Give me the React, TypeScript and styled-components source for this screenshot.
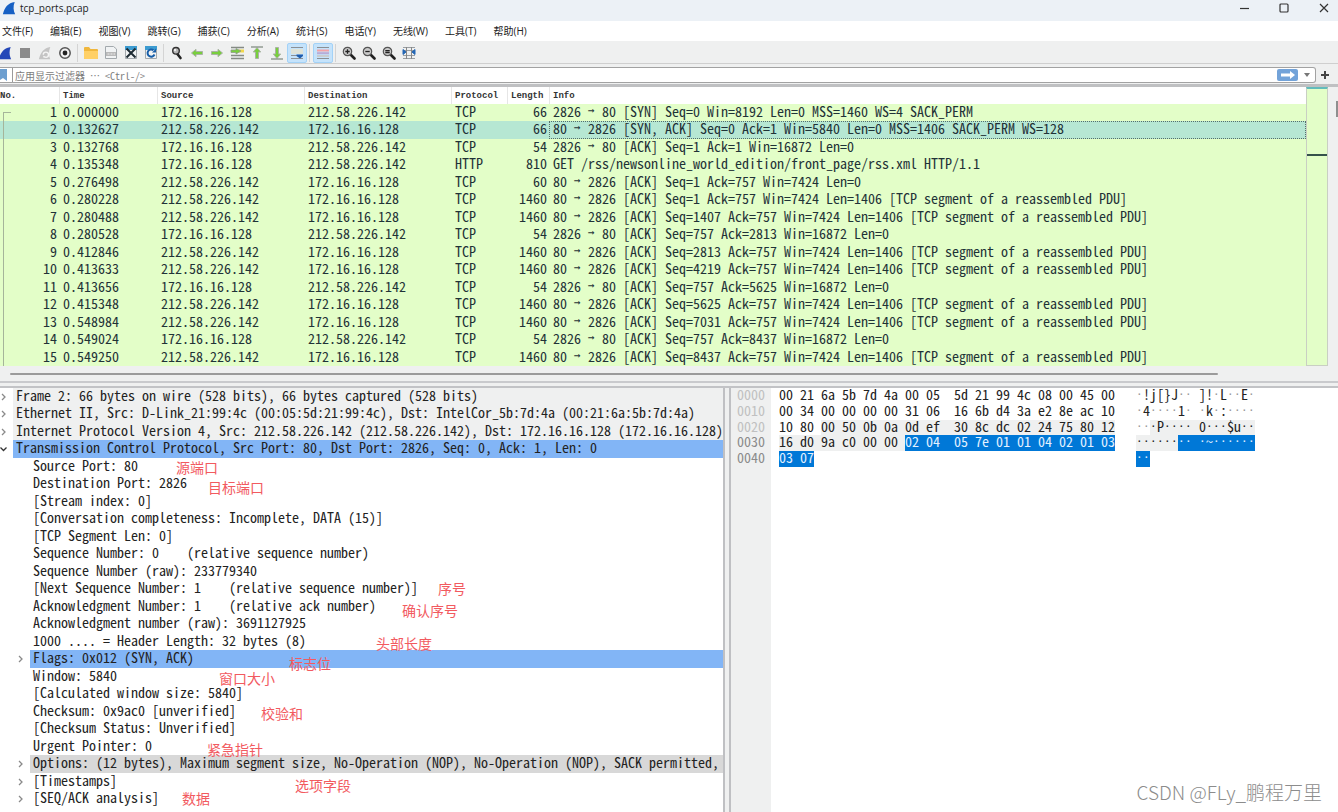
import React from 'react';
import styled, { createGlobalStyle, css } from 'styled-components';

const MONO = '"Noto Sans Mono CJK SC", "Liberation Mono", monospace';
const UI = '"Open Sans", "Noto Sans CJK SC", sans-serif';
const CHROME = '#eff0f0';
const GREEN = '#e3fec8';

const GlobalStyle = createGlobalStyle`
  * { box-sizing: border-box; }
  body { margin: 0; background: ${CHROME}; overflow-x: hidden; }
  button { border: 0; padding: 0; background: none; font: inherit; color: inherit; }
`;

const Window = styled.div`
  position: relative;
  display: flex;
  flex-direction: column;
  min-height: 100vh;
  background: ${CHROME};
  font-family: ${UI};
  color: #222;
`;

const TitleBar = styled.header`
  display: flex;
  align-items: flex-start;
  justify-content: space-between;
  height: 21px;
  padding-left: 2px;
  background: #ecf1f6;
`;

const Title = styled.h1`
  display: flex;
  align-items: center;
  gap: 4px;
  margin: 0;
  font-size: 10px;
  font-weight: 400;
  line-height: 16px;
`;

const WindowButtons = styled.div`
  display: flex;
  gap: 20px;
  padding-right: 4px;
`;

const WindowButton = styled.button`
  display: flex;
  align-items: center;
  justify-content: center;
  width: 20px;
  height: 15px;
  color: #333;
`;

const MenuBar = styled.nav`
  display: flex;
  gap: 17px;
  height: 20px;
  padding-left: 2px;
  background: #fff;
`;

const MenuItem = styled.button`
  font-size: 10px;
  line-height: 20px;
  white-space: nowrap;
`;

const ToolBar = styled.div`
  display: flex;
  align-items: center;
  height: 22px;
  margin-left: -5px;
  padding-top: 1px;
`;

const ToolButton = styled.button<{ $on?: boolean }>`
  display: flex;
  align-items: center;
  justify-content: center;
  width: 20px;
  height: 20px;
  border-radius: 2px;
  ${p => p.$on && css`background: #c5e3fb; border: 1px solid #a3d2f7;`}
`;

const ToolLine = styled.span`
  width: 6px;
  height: 18px;
  background: linear-gradient(90deg, transparent 2px, #d4d4d4 2px, #d4d4d4 3px, transparent 3px);
`;

const FilterBar = styled.form`
  display: flex;
  align-items: center;
  height: 21px;
  padding-top: 2px;
  border-top: 1px solid #cfcfcf;
`;

const FilterBox = styled.div`
  display: flex;
  align-items: center;
  flex: 1;
  height: 16px;
  border: 1px solid #a2a2a2;
  border-left: 0;
  border-radius: 0 3px 3px 0;
  background: #fff;
`;

const Bookmark = styled.button`
  display: flex;
  width: 13px;
  height: 14px;
  border-right: 1px solid #9a9a9a;
  align-items: center;
`;

const FilterInput = styled.input`
  flex: 1;
  min-width: 0;
  height: 14px;
  padding: 0 2px;
  border: 0;
  outline: 0;
  background: none;
  font-family: ${MONO};
  font-size: 10px;
  &::placeholder { color: #7d7d7d; opacity: 1; }
`;

const ApplyButton = styled.button`
  display: flex;
  align-items: center;
  justify-content: center;
  width: 21px;
  height: 12px;
  border-radius: 2px;
  background: #73a3d9;
`;

const SmallButton = styled.button`
  display: flex;
  align-items: center;
  justify-content: center;
  width: 17px;
  height: 14px;
  color: #444;
`;

const AddButton = styled(SmallButton)`
  width: 22px;
  padding-right: 4px;
`;

const PacketPane = styled.section`
  display: flex;
  border-top: 3px solid #bfc0c2;
`;

const PacketTable = styled.table`
  flex: 1;
  min-width: 0;
  table-layout: fixed;
  border-collapse: separate;
  border-spacing: 0;
  background: #fff;
  font-family: ${MONO};
`;

const HeadCell = styled.th<{ $w?: number }>`
  width: ${p => (p.$w ? `${p.$w}px` : 'auto')};
  height: 17px;
  padding: 0 0 0 3px;
  border-left: 1px solid #e6e6e6;
  color: #333;
  font-family: "Liberation Mono", monospace;
  font-size: 9px;
  font-weight: 700;
  line-height: 16px;
  text-align: left;
  white-space: nowrap;
  &:first-child { padding-left: 0; border-left: 0; }
`;

const PacketRow = styled.tr<{ $selected: boolean }>`
  height: 18px;
  background: ${p => (p.$selected ? '#b6e7d3' : GREEN)};
  &:nth-child(odd) { height: 17px; }
`;

const Cell = styled.td<{ $right?: boolean; $focus?: boolean }>`
  padding: 0 ${p => (p.$right ? 2 : 0)}px 0 ${p => (p.$right ? 0 : 4)}px;
  color: #1f3237;
  font-size: 14px;
  line-height: 14px;
  vertical-align: top;
  text-align: ${p => (p.$right ? 'right' : 'left')};
  white-space: pre;
  ${p => p.$focus && css`outline: 1px dotted #55706a; outline-offset: -1px;`}
`;

const NumberCell = styled(Cell)`
  position: relative;
  &::before {
    content: '';
    position: absolute;
    top: 0;
    bottom: 0;
    left: 3px;
    border-left: 1px solid #a5b59a;
  }
  ${PacketRow}:first-child &::before {
    top: 8px;
    width: 7px;
    border-top: 1px solid #a5b59a;
  }
`;

const Arrow = styled.span`
  display: inline-block;
  width: 7px;
  font-family: "DejaVu Sans Mono", monospace;
  font-size: 11px;
  line-height: 14px;
  vertical-align: top;
`;

const MiniMap = styled.div`
  width: 22px;
  padding-top: 65px;
  border: 1px solid #c9cfc3;
  border-top: 2px solid #62bcbc;
  background: ${GREEN};
  &::before { content: ''; display: block; height: 2px; background: #35524b; }
`;

const VerticalTrack = styled.div`
  width: 10px;
  padding: 14px 0 0 8px;
  &::before { content: ''; display: block; height: 16px; background: #8f8f8f; }
`;

const HorizontalTrack = styled.div`
  height: 15px;
  padding: 7px 0 0 10px;
`;

const HorizontalThumb = styled.div`
  width: 91%;
  height: 2px;
  border-radius: 1px;
  background: #9b9b9b;
`;

const Splitter = styled.div`
  height: 7px;
  border-top: 2px solid #c9cacd;
  border-bottom: 2px solid #c2c3c6;
`;

const DetailPanes = styled.main`
  display: grid;
  grid-template-columns: 723fr 8px 607fr;
  flex: 1;
`;

const PaneHandle = styled.div`
  border-left: 2px solid #bfc0c3;
  border-right: 2px solid #bfc0c3;
`;

const TreePane = styled.section`
  position: relative;
  min-width: 0;
  background: #fff;
`;

const Tree = styled.ul`
  margin: 0;
  padding: 0;
  list-style: none;
  font-family: ${MONO};
  font-size: 14px;
`;

const TreeRow = styled.li<{ $level: number }>`
  display: flex;
  align-items: center;
  height: 18px;
  padding-left: ${p => p.$level * 17}px;
  &:nth-child(odd) { height: 17px; }
`;

const Twisty = styled.button`
  display: flex;
  flex: none;
  width: 8px;
  margin-right: 5px;
  height: 16px;
  align-items: center;
`;

const TwistySpace = styled.span`
  flex: none;
  width: 13px;
`;

const tones = { plain: 'transparent', gray: CHROME, blue: '#82b5f6', dark: '#d8d8d8' };

const TreeLabel = styled.span<{ $tone: keyof typeof tones }>`
  flex: 1;
  min-width: 0;
  align-self: stretch;
  padding-left: 3px;
  background: ${p => tones[p.$tone]};
  color: #222;
  line-height: 14px;
  white-space: pre;
`;

const Note = styled.span<{ $x: number; $y: number }>`
  position: absolute;
  left: ${p => p.$x}px;
  top: ${p => p.$y}px;
  color: #f25a5f;
  font-family: "Noto Sans CJK SC", sans-serif;
  font-size: 14px;
  line-height: 20px;
  white-space: nowrap;
`;

const BytesPane = styled.section`
  min-width: 0;
  background: linear-gradient(90deg, ${CHROME} 40px, #fff 40px);
  font-family: ${MONO};
  font-size: 14px;
`;

const BytesLine = styled.div`
  display: flex;
  height: 16px;
  line-height: 13px;
  white-space: pre;
  &:nth-child(3n) { height: 15px; }
`;

const Offset = styled.span<{ $strong: boolean }>`
  width: 42px;
  padding-left: 6px;
  margin-right: 6px;
  color: ${p => (p.$strong ? '#8b8b8b' : '#c0c0c0')};
`;

const BytesColumn = styled.span<{ $w: number }>`
  display: flex;
  flex: none;
  width: ${p => p.$w}px;
`;

const marks = {
  none: css`color: #222;`,
  field: css`color: #222; background: ${CHROME};`,
  pick: css`color: #e3f1ff; background: #0078d7;`,
};

const Run = styled.span<{ $mark: keyof typeof marks }>`
  flex: none;
  ${p => marks[p.$mark]}
`;

const Dot = styled.span<{ $dim: boolean }>`
  display: inline-block;
  width: 7px;
  font-family: "DejaVu Sans Mono", monospace;
  font-size: 11px;
  line-height: 13px;
  vertical-align: top;
  ${p => p.$dim && css`color: #999;`}
`;

const Watermark = styled.div`
  position: absolute;
  right: 16px;
  bottom: 6px;
  color: #8c8c8c;
  font-family: "Noto Sans CJK SC", sans-serif;
  font-size: 19px;
  font-weight: 300;
  line-height: 28px;
`;

const A = '212.58.226.142';
const B = '172.16.16.128';
type Packet = [string, string, string, string, string, string];
const packets: Packet[] = [
  ['0.000000', B, A, 'TCP', '66', '2826 → 80 [SYN] Seq=0 Win=8192 Len=0 MSS=1460 WS=4 SACK_PERM'],
  ['0.132627', A, B, 'TCP', '66', '80 → 2826 [SYN, ACK] Seq=0 Ack=1 Win=5840 Len=0 MSS=1406 SACK_PERM WS=128'],
  ['0.132768', B, A, 'TCP', '54', '2826 → 80 [ACK] Seq=1 Ack=1 Win=16872 Len=0'],
  ['0.135348', B, A, 'HTTP', '810', 'GET /rss/newsonline_world_edition/front_page/rss.xml HTTP/1.1'],
  ['0.276498', A, B, 'TCP', '60', '80 → 2826 [ACK] Seq=1 Ack=757 Win=7424 Len=0'],
  ['0.280228', A, B, 'TCP', '1460', '80 → 2826 [ACK] Seq=1 Ack=757 Win=7424 Len=1406 [TCP segment of a reassembled PDU]'],
  ['0.280488', A, B, 'TCP', '1460', '80 → 2826 [ACK] Seq=1407 Ack=757 Win=7424 Len=1406 [TCP segment of a reassembled PDU]'],
  ['0.280528', B, A, 'TCP', '54', '2826 → 80 [ACK] Seq=757 Ack=2813 Win=16872 Len=0'],
  ['0.412846', A, B, 'TCP', '1460', '80 → 2826 [ACK] Seq=2813 Ack=757 Win=7424 Len=1406 [TCP segment of a reassembled PDU]'],
  ['0.413633', A, B, 'TCP', '1460', '80 → 2826 [ACK] Seq=4219 Ack=757 Win=7424 Len=1406 [TCP segment of a reassembled PDU]'],
  ['0.413656', B, A, 'TCP', '54', '2826 → 80 [ACK] Seq=757 Ack=5625 Win=16872 Len=0'],
  ['0.415348', A, B, 'TCP', '1460', '80 → 2826 [ACK] Seq=5625 Ack=757 Win=7424 Len=1406 [TCP segment of a reassembled PDU]'],
  ['0.548984', A, B, 'TCP', '1460', '80 → 2826 [ACK] Seq=7031 Ack=757 Win=7424 Len=1406 [TCP segment of a reassembled PDU]'],
  ['0.549024', B, A, 'TCP', '54', '2826 → 80 [ACK] Seq=757 Ack=8437 Win=16872 Len=0'],
  ['0.549250', A, B, 'TCP', '1460', '80 → 2826 [ACK] Seq=8437 Ack=757 Win=7424 Len=1406 [TCP segment of a reassembled PDU]'],
];

type Node = { text: string; level?: number; tone?: keyof typeof tones; twisty?: 'open' | 'closed' };
const nodes: Node[] = [
  { text: 'Frame 2: 66 bytes on wire (528 bits), 66 bytes captured (528 bits)', level: 0, tone: 'gray', twisty: 'closed' },
  { text: 'Ethernet II, Src: D-Link_21:99:4c (00:05:5d:21:99:4c), Dst: IntelCor_5b:7d:4a (00:21:6a:5b:7d:4a)', level: 0, tone: 'gray', twisty: 'closed' },
  { text: 'Internet Protocol Version 4, Src: 212.58.226.142 (212.58.226.142), Dst: 172.16.16.128 (172.16.16.128)', level: 0, tone: 'gray', twisty: 'closed' },
  { text: 'Transmission Control Protocol, Src Port: 80, Dst Port: 2826, Seq: 0, Ack: 1, Len: 0', level: 0, tone: 'blue', twisty: 'open' },
  { text: 'Source Port: 80' },
  { text: 'Destination Port: 2826' },
  { text: '[Stream index: 0]' },
  { text: '[Conversation completeness: Incomplete, DATA (15)]' },
  { text: '[TCP Segment Len: 0]' },
  { text: 'Sequence Number: 0    (relative sequence number)' },
  { text: 'Sequence Number (raw): 233779340' },
  { text: '[Next Sequence Number: 1    (relative sequence number)]' },
  { text: 'Acknowledgment Number: 1    (relative ack number)' },
  { text: 'Acknowledgment number (raw): 3691127925' },
  { text: '1000 .... = Header Length: 32 bytes (8)' },
  { text: 'Flags: 0x012 (SYN, ACK)', tone: 'blue', twisty: 'closed' },
  { text: 'Window: 5840' },
  { text: '[Calculated window size: 5840]' },
  { text: 'Checksum: 0x9ac0 [unverified]' },
  { text: '[Checksum Status: Unverified]' },
  { text: 'Urgent Pointer: 0' },
  { text: 'Options: (12 bytes), Maximum segment size, No-Operation (NOP), No-Operation (NOP), SACK permitted,', tone: 'dark', twisty: 'closed' },
  { text: '[Timestamps]', twisty: 'closed' },
  { text: '[SEQ/ACK analysis]', twisty: 'closed' },
];

const notes: [string, number, number][] = [
  ['源端口', 176, 69],
  ['目标端口', 208, 89],
  ['序号', 438, 190],
  ['确认序号', 402, 212],
  ['头部长度', 376, 245],
  ['标志位', 289, 265],
  ['窗口大小', 219, 280],
  ['校验和', 261, 315],
  ['紧急指针', 207, 351],
  ['选项字段', 295, 387],
  ['数据', 182, 400],
];

type Piece = [string, keyof typeof marks];
const dump: { offset: string; hex: Piece[]; text: Piece[] }[] = [
  { offset: '0000', hex: [['00 21 6a 5b 7d 4a 00 05  5d 21 99 4c 08 00 45 00', 'none']], text: [['·!j[}J·· ]!·L··E·', 'none']] },
  { offset: '0010', hex: [['00 34 00 00 00 00 31 06  16 6b d4 3a e2 8e ac 10', 'none']], text: [['·4····1· ·k·:····', 'none']] },
  { offset: '0020', hex: [['10 80 ', 'none'], ['00 50 0b 0a 0d ef  30 8c dc 02 24 75 80 12', 'field']], text: [['··', 'none'], ['·P···· 0···$u··', 'field']] },
  { offset: '0030', hex: [['16 d0 9a c0 00 00 ', 'field'], ['02 04  05 7e 01 01 04 02 01 03', 'pick']], text: [['······', 'field'], ['·· ·~······', 'pick']] },
  { offset: '0040', hex: [['03 07', 'pick']], text: [['··', 'pick']] },
];

const menus = ['文件(F)', '编辑(E)', '视图(V)', '跳转(G)', '捕获(C)', '分析(A)', '统计(S)', '电话(Y)', '无线(W)', '工具(T)', '帮助(H)'];
const columns: [string, number?][] = [['No.', 59], ['Time', 98], ['Source', 147], ['Destination', 147], ['Protocol', 56], ['Length', 42], ['Info']];

const Fin = ({ fill, size = 14 }: { fill: string; size?: number }) => (
  <svg width={size} height={size} viewBox="0 0 16 16">
    <path d="M1 15C3 7 7 2 14.500 1C12.500 6 13 11 15 15Z" fill={fill} />
  </svg>
);

const Lens = ({ sign }: { sign?: string }) => (
  <svg width="14" height="14" viewBox="0 0 14 14">
    <path d="M8.500 8.500L12.500 12.500" stroke="#222" strokeWidth="2.600" strokeLinecap="round" />
    <circle cx="5.500" cy="5.500" r="4.200" fill="#c9c9c9" stroke="#555" strokeWidth="1.200" />
    {sign && <path d={sign} stroke="#222" strokeWidth="1.300" fill="none" />}
  </svg>
);

const GreenArrow = ({ turn, bar }: { turn: number; bar?: string }) => (
  <svg width="14" height="16" viewBox="0 0 14 16">
    <g transform={`rotate(${turn} 7 8)`}>
      <path d="M1.500 8L6 4.300V6.500H12.500V9.500H6V11.700Z" fill="#78cf3c" stroke="#a9b3a4" strokeWidth="1" />
    </g>
    {bar && <path d={bar} stroke="#8c948c" strokeWidth="1.400" />}
  </svg>
);

const Sheet = ({ children }: { children: React.ReactNode }) => (
  <svg width="14" height="15" viewBox="0 0 14 15">
    <path d="M1.500 1.500H9.500L12.500 4V13.500H1.500Z" fill="#f1f3f4" stroke="#a3a9ad" />
    {children}
  </svg>
);

type Tool = { name: string; icon: React.ReactNode; on?: boolean } | 'line';
const tools: Tool[] = [
  { name: '开始捕获', icon: <Fin fill="#2447b8" /> },
  { name: '停止捕获', icon: <svg width="12" height="12"><rect x="1" y="1" width="10" height="10" fill="#8b8b8b" /></svg> },
  { name: '重新捕获', icon: (
    <svg width="14" height="14" viewBox="0 0 16 16">
      <path d="M1 15C3 7 7 2 14 1C12 6 12 11 14 15Z" fill="#c4c4c4" />
      <path d="M6 10A3 3 0 1 1 9 13M9 13L6 12" fill="none" stroke="#f5f5f5" strokeWidth="1.600" />
    </svg>
  ) },
  { name: '捕获选项', icon: (
    <svg width="14" height="14" viewBox="0 0 14 14">
      <circle cx="7" cy="7" r="5.200" fill="#f2f2f2" stroke="#555" strokeWidth="1.500" />
      <circle cx="7" cy="7" r="2.400" fill="#222" />
    </svg>
  ) },
  'line',
  { name: '打开', icon: (
    <svg width="16" height="14" viewBox="0 0 16 14">
      <path d="M1 2Q1 1 2 1H6L7.500 3H14Q15 3 15 4V12Q15 13 14 13H2Q1 13 1 12Z" fill="#f0b73d" />
      <path d="M1 5H15V12Q15 13 14 13H2Q1 13 1 12Z" fill="#ffd066" />
    </svg>
  ) },
  { name: '保存', icon: <Sheet><rect x="2" y="7" width="10" height="4" fill="#b9b9b9" /><path d="M3.500 9H11" stroke="#eee" strokeDasharray="2 1" /></Sheet> },
  { name: '关闭', icon: <Sheet><rect x="1" y="1" width="12" height="4" fill="#3c9bd0" /><path d="M2.500 3.500L11.500 12.500M11.500 3.500L2.500 12.500" stroke="#1e2b33" strokeWidth="2" /></Sheet> },
  { name: '重新加载', icon: <Sheet><rect x="1" y="1" width="12" height="4" fill="#3c9bd0" /><path d="M10.500 9.500A3.600 3.600 0 1 1 9.500 5.300" fill="none" stroke="#175ea8" strokeWidth="2" /><path d="M8 7.500H12V3.500Z" fill="#175ea8" /></Sheet> },
  'line',
  { name: '查找', icon: (
    <svg width="14" height="14" viewBox="0 0 14 14">
      <path d="M7 7.500L10.500 12" stroke="#222" strokeWidth="2.600" strokeLinecap="round" />
      <circle cx="6" cy="4.800" r="3.300" fill="#b5b5b5" stroke="#333" strokeWidth="1.400" />
      <circle cx="5" cy="4" r="1.200" fill="#eee" />
    </svg>
  ) },
  { name: '后退', icon: <GreenArrow turn={0} /> },
  { name: '前进', icon: <GreenArrow turn={180} /> },
  { name: '转到分组', icon: (
    <svg width="15" height="14" viewBox="0 0 15 14">
      <path d="M1 1.500H14M1 9.500H14M1 12.500H14" stroke="#858a85" strokeWidth="1.400" />
      <path d="M9 5H14" stroke="#f1d84c" strokeWidth="3" />
      <path d="M1 6.500H6V8L11 5L6 2.500V4H1Z" fill="#78cf3c" stroke="#8e998a" strokeWidth=".8" />
    </svg>
  ) },
  { name: '首个分组', icon: <GreenArrow turn={90} bar="M1 2H13" /> },
  { name: '末个分组', icon: <GreenArrow turn={270} bar="M1 14H13" /> },
  { name: '自动滚动', on: true, icon: (
    <svg width="14" height="14" viewBox="0 0 14 14">
      <path d="M1 1.500H13M1 12.500H13" stroke="#8b9095" strokeWidth="1.200" />
      <path d="M1 3H13V8H1Z" fill="#dfe3d8" />
      <path d="M1 9.500H7" stroke="#8b9095" />
      <path d="M6.500 8.500H13V10L10 12.500L6.500 10Z" fill="#1e5dae" />
    </svg>
  ) },
  'line',
  { name: '着色', on: true, icon: (
    <svg width="14" height="14" viewBox="0 0 14 14">
      <path d="M1 1.500H13M1 12.500H13" stroke="#8b9095" strokeWidth="1.200" />
      <path d="M1 4.500H13" stroke="#f2a3a8" strokeWidth="2" />
      <path d="M1 7.200H13" stroke="#b8abd6" strokeWidth="2" />
      <path d="M1 10H13" stroke="#c9cdd0" strokeWidth="2" />
    </svg>
  ) },
  'line',
  { name: '放大', icon: <Lens sign="M3.300 5.500H7.700M5.500 3.300V7.700" /> },
  { name: '缩小', icon: <Lens sign="M3.300 5.500H7.700" /> },
  { name: '普通大小', icon: <Lens sign="M3.300 4.700H7.700M3.300 6.500H7.700" /> },
  { name: '调整列宽', icon: (
    <svg width="14" height="14" viewBox="0 0 14 14">
      <path d="M1 1.500H13M1 4.500H13M1 9.500H13M1 12.500H13" stroke="#9a9fa3" strokeWidth="1.200" />
      <path d="M4.500 1V13M9.500 1V13" stroke="#888" />
      <path d="M1 3.500L4 6L1 8.500ZM13 3.500L10 6L13 8.500Z" fill="#2467b5" stroke="#2467b5" />
    </svg>
  ) },
];

const InfoText = ({ text }: { text: string }) => {
  const [before, after] = text.split('→');
  return after === undefined ? <>{text}</> : <>{before}<Arrow>→</Arrow>{after}</>;
};

const AsciiText = ({ text, dim }: { text: string; dim: boolean }) => (
  <>{[...text].map((c, i) => (c === '·' ? <Dot key={i} $dim={dim}>{c}</Dot> : c))}</>
);

export default function App() {
  return (
    <Window>
      <GlobalStyle />
      <TitleBar>
        <Title><Fin fill="#1660c4" />tcp_ports.pcap</Title>
        <WindowButtons>
          <WindowButton aria-label="最小化"><svg width="10" height="10"><path d="M1 5.500H10" stroke="currentColor" strokeWidth="1.200" /></svg></WindowButton>
          <WindowButton aria-label="最大化"><svg width="10" height="10"><rect x="1" y="1" width="8" height="8" rx="1" fill="none" stroke="currentColor" strokeWidth="1.200" /></svg></WindowButton>
          <WindowButton aria-label="关闭窗口"><svg width="10" height="10"><path d="M1 1L9 9M9 1L1 9" stroke="currentColor" strokeWidth="1.200" /></svg></WindowButton>
        </WindowButtons>
      </TitleBar>
      <MenuBar>{menus.map(m => <MenuItem key={m}>{m}</MenuItem>)}</MenuBar>
      <ToolBar role="toolbar">
        {tools.map((t, i) =>
          t === 'line'
            ? <ToolLine key={i} />
            : <ToolButton key={t.name} aria-label={t.name} $on={t.on}>{t.icon}</ToolButton>
        )}
      </ToolBar>
      <FilterBar onSubmit={e => e.preventDefault()}>
        <FilterBox>
          <Bookmark type="button" aria-label="书签"><svg width="8" height="12"><path d="M0 0H7V12L3 9L0 11Z" fill="#6d9fd0" /></svg></Bookmark>
          <FilterInput aria-label="显示过滤器" placeholder="应用显示过滤器 ⋯ <Ctrl-/>" />
          <ApplyButton aria-label="应用"><svg width="16" height="8"><path d="M1 2.500H10V0L15 4L10 8V5.500H1Z" fill="#fff" /></svg></ApplyButton>
          <SmallButton type="button" aria-label="历史"><svg width="6" height="4"><path d="M0 0H6L3 4Z" fill="#777" /></svg></SmallButton>
        </FilterBox>
        <AddButton type="button" aria-label="添加"><svg width="8" height="8"><path d="M4 0V8M0 4H8" stroke="currentColor" strokeWidth="2" /></svg></AddButton>
      </FilterBar>
      <PacketPane>
        <PacketTable>
          <thead>
            <tr>{columns.map(([name, w]) => <HeadCell key={name} $w={w}>{name}</HeadCell>)}</tr>
          </thead>
          <tbody>
            {packets.map(([time, src, dst, proto, len, info], i) => (
              <PacketRow key={time} $selected={i === 1}>
                <NumberCell $right>{i + 1}</NumberCell>
                <Cell>{time}</Cell>
                <Cell>{src}</Cell>
                <Cell>{dst}</Cell>
                <Cell>{proto}</Cell>
                <Cell $right>{len}</Cell>
                <Cell $focus={i === 1}><InfoText text={info} /></Cell>
              </PacketRow>
            ))}
          </tbody>
        </PacketTable>
        <MiniMap />
        <VerticalTrack />
      </PacketPane>
      <HorizontalTrack><HorizontalThumb /></HorizontalTrack>
      <Splitter />
      <DetailPanes>
        <TreePane>
          <Tree>
            {nodes.map(({ text, level = 1, tone = 'plain', twisty }) => (
              <TreeRow key={text} $level={level}>
                {twisty ? (
                  <Twisty aria-label={twisty === 'open' ? '折叠' : '展开'}>
                    <svg width="8" height="8">
                      <path
                        d={twisty === 'open' ? 'M0.500 2.500L3.500 5.500L6.500 2.500' : 'M2 1L5 4L2 7'}
                        fill="none"
                        stroke={twisty === 'open' ? '#333' : '#8a8a8a'}
                        strokeWidth="1.300"
                      />
                    </svg>
                  </Twisty>
                ) : <TwistySpace />}
                <TreeLabel $tone={tone}>{text}</TreeLabel>
              </TreeRow>
            ))}
          </Tree>
          {notes.map(([text, x, y]) => <Note key={text} $x={x} $y={y}>{text}</Note>)}
        </TreePane>
        <PaneHandle />
        <BytesPane>
          {dump.map(({ offset, hex, text }, i) => (
            <BytesLine key={offset}>
              <Offset $strong={i > 2}>{offset}</Offset>
              <BytesColumn $w={357}>{hex.map(([s, mark]) => <Run key={s} $mark={mark}>{s}</Run>)}</BytesColumn>
              <BytesColumn $w={119}>
                {text.map(([s, mark], j) => <Run key={j} $mark={mark}><AsciiText text={s} dim={mark === 'none'} /></Run>)}
              </BytesColumn>
            </BytesLine>
          ))}
        </BytesPane>
      </DetailPanes>
      <Watermark>CSDN @FLy_鹏程万里</Watermark>
    </Window>
  );
}
